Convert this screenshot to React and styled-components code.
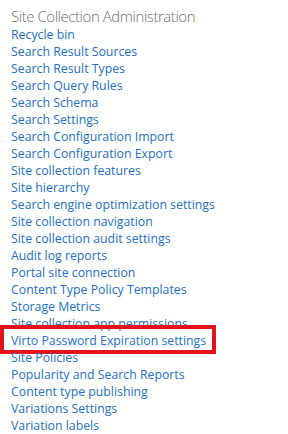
import React from "react";
import styled, { createGlobalStyle } from "styled-components";

const links = [
  "Recycle bin",
  "Search Result Sources",
  "Search Result Types",
  "Search Query Rules",
  "Search Schema",
  "Search Settings",
  "Search Configuration Import",
  "Search Configuration Export",
  "Site collection features",
  "Site hierarchy",
  "Search engine optimization settings",
  "Site collection navigation",
  "Site collection audit settings",
  "Audit log reports",
  "Portal site connection",
  "Content Type Policy Templates",
  "Storage Metrics",
  "Site collection app permissions",
  "Virto Password Expiration settings",
  "Site Policies",
  "Popularity and Search Reports",
  "Content type publishing",
  "Variations Settings",
  "Variation labels",
];

const GlobalStyle = createGlobalStyle`
  body {
    margin: 0;
    background: #fff;
    font-family: "Open Sans", "Liberation Sans", sans-serif;
  }
`;

const Panel = styled.div`
  padding: 6px 0 0 11px;
  width: 288px;
  height: 434px;
  box-sizing: border-box;
  overflow: hidden;
`;

const Title = styled.div`
  font-size: 15px;
  font-weight: 300;
  letter-spacing: -0.45px;
  color: #6f6f6f;
  line-height: 20px;
  height: 20px;
`;

const List = styled.ul`
  list-style: none;
  margin: 0;
  padding: 0;
`;

const Item = styled.li`
  position: relative;
  line-height: 17px;
  height: 17px;
  font-size: 12.3px;
  white-space: nowrap;

  &::after {
    content: "";
    display: ${(p) => (p.$marked ? "block" : "none")};
    position: absolute;
    left: -11px;
    top: -7px;
    width: 216px;
    height: 29px;
    border: 4px solid #e5121c;
    box-sizing: border-box;
    pointer-events: none;
  }
`;

const Link = styled.a`
  color: #2370c6;
  text-decoration: none;
`;

export default function App() {
  return (
    <>
      <GlobalStyle />
      <Panel>
        <Title>Site Collection Administration</Title>
        <List>
          {links.map((l) => (
            <Item key={l} $marked={l.startsWith("Virto")}>
              <Link href="#">{l}</Link>
            </Item>
          ))}
        </List>
      </Panel>
    </>
  );
}
